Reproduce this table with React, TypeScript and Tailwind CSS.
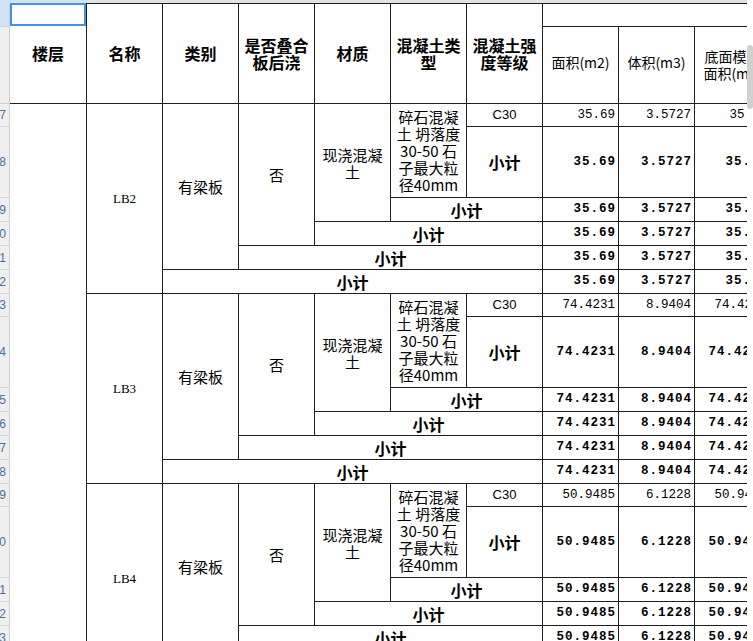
import React from 'react';

interface Block {
  name: string;
  area: string;
  vol: string;
  rows: number[];
}

const blocks: Block[] = [
  { name: 'LB2', area: '35.69', vol: '3.5727', rows: [7, 8, 9, 10, 11, 12] },
  { name: 'LB3', area: '74.4231', vol: '8.9404', rows: [13, 14, 15, 16, 17, 18] },
  { name: 'LB4', area: '50.9485', vol: '6.1228', rows: [19, 20, 21, 22, 23, 24] },
];

// heights of the six rows inside one block
const blockRowH = ['h-[23px]', 'h-[71px]', 'h-[24px]', 'h-[24px]', 'h-[24px]', 'h-[24px]'];
const rowPos = ['row-start-1', 'row-start-2', 'row-start-3', 'row-start-4', 'row-start-5', 'row-start-6'];
const colPos = ['col-start-7', 'col-start-8', 'col-start-9'];

const line = 'border-l border-t border-[#1e1e1e] flex items-center overflow-hidden';
const cjk = "font-['Noto_Sans_CJK_SC',sans-serif]";
const num = "font-['Liberation_Mono',monospace] text-[12.5px] justify-end whitespace-nowrap";

function RowHeader() {
  return (
    <div className="w-[10px] shrink-0 flex flex-col bg-[#efefef] border-r border-[#cfcfcf] text-[12px] text-[#4a6f9c] font-['Liberation_Sans',sans-serif]">
      <div className="h-[23px] bg-[#d3e3f6]" />
      <div className="h-[77px] border-t border-[#d6d6d6]" />
      {blocks.map((b) =>
        b.rows.map((r, i) => (
          <div
            key={r}
            className={`${blockRowH[i]} shrink-0 border-t border-[#d6d6d6] flex items-center justify-end pr-[3px] overflow-hidden whitespace-nowrap`}
          >
            {r}
          </div>
        ))
      )}
    </div>
  );
}

function HeaderGrid() {
  const h = `${line} justify-center text-center ${cjk} font-bold text-[16px] leading-[17px] text-black row-span-2`;
  const n = `${line} justify-center text-center ${cjk} text-[14px] leading-[17px] text-black whitespace-nowrap`;
  return (
    <div className="grid w-[760px] grid-cols-[repeat(10,76px)] grid-rows-[23px_77px]">
      <div className={`${h} border-l-0`}>楼层</div>
      <div className={h}>名称</div>
      <div className={h}>类别</div>
      <div className={h}>是否叠合<br />板后浇</div>
      <div className={h}>材质</div>
      <div className={h}>混凝土类<br />型</div>
      <div className={h}>混凝土强<br />度等级</div>
      <div className={`${line} col-span-3`} />
      <div className={`${n} pb-[6px]`}>面积(m2)</div>
      <div className={`${n} pb-[6px]`}>体积(m3)</div>
      <div className={n}>底面模板<br />面积(m2)</div>
    </div>
  );
}

function BlockGrid({ b }: { b: Block }) {
  const c = `${line} justify-center text-center text-black`;
  const sub = `${c} ${cjk} font-bold text-[16px]`;
  const body = `${c} ${cjk} text-[15px] leading-[17px]`;
  return (
    <div className="grid w-[684px] grid-cols-[repeat(9,76px)] grid-rows-[23px_71px_24px_24px_24px_24px]">
      <div className={`${c} col-start-1 row-start-1 row-span-6 font-['Liberation_Serif',serif] text-[13px]`}>{b.name}</div>
      <div className={`${body} col-start-2 row-start-1 row-span-5`}>有梁板</div>
      <div className={`${body} col-start-3 row-start-1 row-span-4`}>否</div>
      <div className={`${body} col-start-4 row-start-1 row-span-3`}>现浇混凝<br />土</div>
      <div className={`${body} col-start-5 row-start-1 row-span-2 whitespace-nowrap`}>
        碎石混凝<br />土 坍落度<br />30-50 石<br />子最大粒<br />径40mm
      </div>
      <div className={`${c} col-start-6 row-start-1 font-['Liberation_Sans',sans-serif] text-[13px]`}>C30</div>
      <div className={`${sub} col-start-6 row-start-2`}>小计</div>
      <div className={`${sub} col-start-5 row-start-3 col-span-2`}>小计</div>
      <div className={`${sub} col-start-4 row-start-4 col-span-3`}>小计</div>
      <div className={`${sub} col-start-3 row-start-5 col-span-4`}>小计</div>
      <div className={`${sub} col-start-2 row-start-6 col-span-5`}>小计</div>
      {rowPos.map((r, i) =>
        [b.area, b.vol, b.area].map((v, j) => (
          <div
            key={`${i}-${j}`}
            className={`${line} ${num} ${r} ${colPos[j]} text-black ${i === 0 ? 'pr-[3px]' : 'pr-[2px] font-bold tracking-[1px]'}`}
          >
            {v}
          </div>
        ))
      )}
    </div>
  );
}

export default function App() {
  return (
    <div className="w-[753px] h-[641px] overflow-hidden bg-white flex">
      <div className="w-[747px] shrink-0 flex flex-col">
        {/* column header strip */}
        <div className="h-[3px] shrink-0 flex">
          <div className="w-[86px] bg-[#d3e3f6]" />
          <div className="flex-1 bg-[#e2e2e2]" />
        </div>
        <div className="flex">
          <RowHeader />
          <div className="relative w-[737px] overflow-hidden">
            <HeaderGrid />
            <div className="flex w-[760px]">
              <div className="w-[76px] shrink-0 border-t border-[#1e1e1e]" />
              <div className="flex flex-col">
                {blocks.map((b) => (
                  <BlockGrid key={b.name} b={b} />
                ))}
              </div>
            </div>
            {/* selected cell */}
            <div className="absolute left-0 top-0 w-[76px] h-[23px] border-2 border-[#4a8fe7]" />
          </div>
        </div>
      </div>
      <div className="w-[6px] shrink-0 pt-[45px]">
        <div className="h-[64px] rounded-[3px] bg-[#d0d0d0]" />
      </div>
    </div>
  );
}
